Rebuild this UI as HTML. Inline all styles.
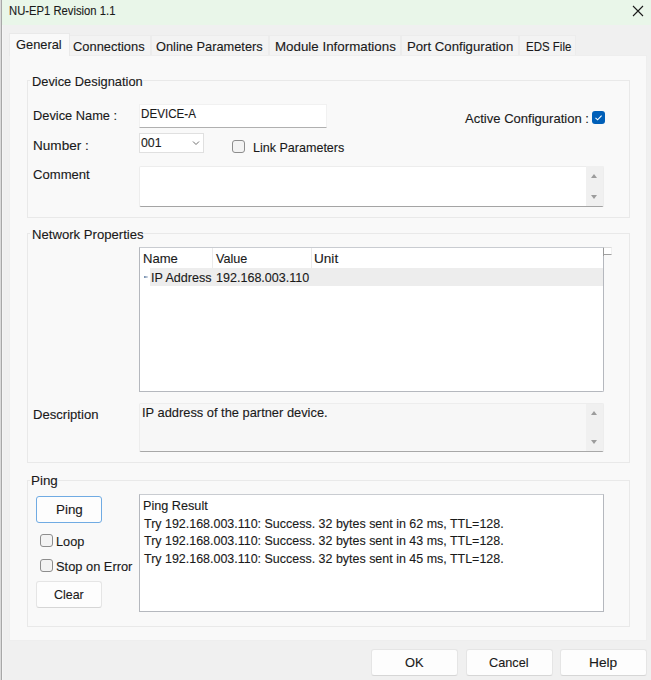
<!DOCTYPE html>
<html><head><meta charset="utf-8"><style>
html,body{margin:0;padding:0;}
body{width:651px;height:680px;overflow:hidden;position:relative;background:#f0f0f0;font-family:'Liberation Sans', sans-serif;}
.a{position:absolute;box-sizing:border-box;}
.t{position:absolute;white-space:pre;line-height:40px;transform-origin:0 0;-webkit-text-stroke:0.12px currentColor;}
</style></head><body>
<!-- window border -->
<div class="a" style="left:0;top:0;width:1px;height:680px;background:#dadada"></div>
<div class="a" style="left:1px;top:0;width:1px;height:680px;background:#a8a8a8"></div>
<div class="a" style="left:2px;top:25px;width:1px;height:655px;background:#f5f5f5"></div>
<!-- title bar -->
<div class="a" style="left:2px;top:0;width:649px;height:25px;background:#e9f6e9"></div>
<svg class="a" style="left:630px;top:3px" width="16" height="16" viewBox="0 0 16 16"><path d="M3 3 L13 13 M13 3 L3 13" stroke="#1a1a1a" stroke-width="1.1" fill="none"/></svg>
<!-- tabs -->
<div class="a" style="left:69px;top:35px;width:82px;height:21px;background:#f3f3f3;border:1px solid #ececec;border-bottom:none"></div>
<div class="a" style="left:151px;top:35px;width:118px;height:21px;background:#f3f3f3;border:1px solid #ececec;border-bottom:none"></div>
<div class="a" style="left:269px;top:35px;width:132px;height:21px;background:#f3f3f3;border:1px solid #ececec;border-bottom:none"></div>
<div class="a" style="left:401px;top:35px;width:118px;height:21px;background:#f3f3f3;border:1px solid #ececec;border-bottom:none"></div>
<div class="a" style="left:519px;top:35px;width:57px;height:21px;background:#f3f3f3;border:1px solid #ececec;border-bottom:none"></div>
<!-- panel -->
<div class="a" style="left:9px;top:55px;width:638px;height:586px;background:#f9f9f9;border:1px solid #eeeeee"></div>
<div class="a" style="left:9px;top:33px;width:61px;height:23px;background:#f9f9f9;border:1px solid #e9e9e9;border-bottom:none"></div>
<!-- group boxes -->
<div class="a" style="left:27px;top:80px;width:603px;height:138px;border:1px solid #e9e9e9"></div>
<div class="a" style="left:30px;top:75px;width:113px;height:10px;background:#f9f9f9"></div>
<div class="a" style="left:27px;top:233px;width:603px;height:230px;border:1px solid #e9e9e9"></div>
<div class="a" style="left:30px;top:228px;width:114px;height:10px;background:#f9f9f9"></div>
<div class="a" style="left:27px;top:480px;width:603px;height:147px;border:1px solid #e9e9e9"></div>
<div class="a" style="left:30px;top:475px;width:28px;height:10px;background:#f9f9f9"></div>
<!-- device name textbox -->
<div class="a" style="left:139px;top:104px;width:188px;height:24px;background:#fff;border:1px solid #f1f1f1;border-bottom:1px solid #b0b0b0;border-radius:1px"></div>
<!-- combo -->
<div class="a" style="left:139px;top:133px;width:65px;height:20px;background:#fff;border:1px solid #e0e0e0"></div>
<svg class="a" style="left:190px;top:139px" width="12" height="8" viewBox="0 0 12 8"><path d="M3 2.5 L6 5.5 L9 2.5" stroke="#707070" stroke-width="1" fill="none"/></svg>
<!-- link params checkbox -->
<div class="a" style="left:232px;top:140px;width:13px;height:13px;background:#f3f3f3;border:1px solid #8d8d8d;border-radius:3px"></div>
<!-- active config checkbox -->
<div class="a" style="left:592px;top:111px;width:13px;height:13px;background:#005fb8;border-radius:3px"></div>
<svg class="a" style="left:592px;top:111px" width="13" height="13" viewBox="0 0 13 13"><path d="M3.5 6.8 L5.6 8.8 L9.6 4.6" stroke="#fff" stroke-width="1.1" fill="none"/></svg>
<!-- comment box -->
<div class="a" style="left:139px;top:166px;width:465px;height:41px;background:#fff;border:1px solid #ededed;border-bottom:1px solid #a4a4a4;border-radius:2px"></div>
<div class="a" style="left:586px;top:166px;width:17px;height:40px;background:#f0f0f0"></div>
<svg class="a" style="left:586px;top:166px" width="17" height="40" viewBox="0 0 17 40"><path d="M5 12 L8 8 L11 12 Z M5 29 L8 33 L11 29 Z" fill="#9c9c9c"/></svg>
<!-- network list -->
<div class="a" style="left:139px;top:247px;width:465px;height:145px;background:#fff;border:1px solid #b5b8be;border-top-color:#c9ccd1;border-radius:0 0 2px 0"></div>
<div class="a" style="left:212px;top:248px;width:1px;height:20px;background:#ebebeb"></div>
<div class="a" style="left:311px;top:248px;width:1px;height:20px;background:#ebebeb"></div>
<div class="a" style="left:150px;top:268px;width:453px;height:18px;background:#ededed"></div>
<svg class="a" style="left:143px;top:274px" width="8" height="6" viewBox="0 0 8 6"><path d="M1 2 L5 2.7 L5 3.3 L1 4 Z" fill="#6f89aa"/></svg>
<div class="a" style="left:604px;top:247px;width:8px;height:8px;background:#fff;border-top:1px solid #dcdcdc;border-bottom:1px solid #a0a0a0;border-right:1px solid #f0f0f0"></div>
<div class="a" style="left:603px;top:248px;width:1px;height:8px;background:#9a9a9a"></div>
<!-- description -->
<div class="a" style="left:139px;top:403px;width:465px;height:49px;background:#f7f7f7;border:1px solid #ededed;border-bottom:1px solid #a8a8a8;border-radius:2px"></div>
<div class="a" style="left:586px;top:404px;width:17px;height:47px;background:#f0f0f0"></div>
<svg class="a" style="left:586px;top:404px" width="17" height="47" viewBox="0 0 17 47"><path d="M5 11 L8 7 L11 11 Z M5 36 L8 40 L11 36 Z" fill="#9c9c9c"/></svg>
<!-- ping buttons -->
<div class="a" style="left:36px;top:496px;width:66px;height:27px;background:#fdfdfd;border:1px solid #70abe3;border-radius:3px"></div>
<div class="a" style="left:40px;top:534px;width:13px;height:13px;background:#f3f3f3;border:1px solid #8d8d8d;border-radius:3px"></div>
<div class="a" style="left:40px;top:559px;width:13px;height:13px;background:#f3f3f3;border:1px solid #8d8d8d;border-radius:3px"></div>
<div class="a" style="left:36px;top:581px;width:66px;height:27px;background:#fdfdfd;border:1px solid #e5e5e5;border-bottom-color:#d6d6d6;border-radius:3px"></div>
<!-- ping result -->
<div class="a" style="left:139px;top:494px;width:465px;height:118px;background:#fff;border:1px solid #b5b8be;border-top-color:#c9ccd1"></div>
<!-- bottom buttons -->
<div class="a" style="left:371px;top:649px;width:87px;height:27px;background:#fdfdfd;border:1px solid #e5e5e5;border-bottom-color:#d6d6d6;border-radius:3px"></div>
<div class="a" style="left:466px;top:649px;width:87px;height:27px;background:#fdfdfd;border:1px solid #e5e5e5;border-bottom-color:#d6d6d6;border-radius:3px"></div>
<div class="a" style="left:560px;top:649px;width:87px;height:27px;background:#fdfdfd;border:1px solid #e5e5e5;border-bottom-color:#d6d6d6;border-radius:3px"></div>

<div class="t" style="left:8.66px;top:-8.90px;font-size:12px;transform:scaleX(0.9384);color:#1a1a1a">NU-EP1 Revision 1.1</div>
<div class="t" style="left:16.31px;top:24.90px;font-size:13px;transform:scaleX(0.9886);color:#1a1a1a">General</div>
<div class="t" style="left:73.41px;top:26.90px;font-size:13px;transform:scaleX(0.9915);color:#1a1a1a">Connections</div>
<div class="t" style="left:156.32px;top:26.90px;font-size:13px;transform:scaleX(0.9841);color:#1a1a1a">Online Parameters</div>
<div class="t" style="left:275.17px;top:26.90px;font-size:13px;transform:scaleX(1.0259);color:#1a1a1a">Module Informations</div>
<div class="t" style="left:407.29px;top:26.90px;font-size:13px;transform:scaleX(1.0136);color:#1a1a1a">Port Configuration</div>
<div class="t" style="left:525.52px;top:26.90px;font-size:13px;transform:scaleX(0.8840);color:#1a1a1a">EDS File</div>
<div class="t" style="left:31.91px;top:61.60px;font-size:13px;transform:scaleX(0.9882);color:#1a1a1a">Device Designation</div>
<div class="t" style="left:32.71px;top:96.30px;font-size:13px;transform:scaleX(0.9867);color:#1a1a1a">Device Name :</div>
<div class="t" style="left:140.91px;top:94.00px;font-size:13px;transform:scaleX(0.8950);color:#1a1a1a">DEVICE-A</div>
<div class="t" style="left:465.20px;top:99.10px;font-size:13px;transform:scaleX(1.0033);color:#1a1a1a">Active Configuration :</div>
<div class="t" style="left:32.56px;top:126.00px;font-size:13px;transform:scaleX(1.0431);color:#1a1a1a">Number :</div>
<div class="t" style="left:141.00px;top:123.30px;font-size:13px;transform:scaleX(0.9476);color:#1a1a1a">001</div>
<div class="t" style="left:252.64px;top:127.90px;font-size:13px;transform:scaleX(0.9645);color:#1a1a1a">Link Parameters</div>
<div class="t" style="left:32.59px;top:155.00px;font-size:13px;transform:scaleX(1.0073);color:#1a1a1a">Comment</div>
<div class="t" style="left:31.89px;top:214.90px;font-size:13px;transform:scaleX(1.0101);color:#1a1a1a">Network Properties</div>
<div class="t" style="left:142.69px;top:238.80px;font-size:13px;transform:scaleX(1.0061);color:#1a1a1a">Name</div>
<div class="t" style="left:216.10px;top:238.80px;font-size:13px;transform:scaleX(0.9719);color:#1a1a1a">Value</div>
<div class="t" style="left:314.15px;top:238.80px;font-size:13px;transform:scaleX(1.0455);color:#1a1a1a">Unit</div>
<div class="t" style="left:150.93px;top:257.70px;font-size:13px;transform:scaleX(0.9656);color:#1a1a1a">IP Address</div>
<div class="t" style="left:215.63px;top:257.70px;font-size:13px;transform:scaleX(0.9653);color:#1a1a1a">192.168.003.110</div>
<div class="t" style="left:32.79px;top:395.10px;font-size:13px;transform:scaleX(1.0063);color:#1a1a1a">Description</div>
<div class="t" style="left:142.31px;top:393.00px;font-size:13px;transform:scaleX(0.9892);color:#1a1a1a">IP address of the partner device.</div>
<div class="t" style="left:30.97px;top:460.60px;font-size:13px;transform:scaleX(1.0292);color:#1a1a1a">Ping</div>
<div class="t" style="left:55.87px;top:490.20px;font-size:13px;transform:scaleX(1.0292);color:#1a1a1a">Ping</div>
<div class="t" style="left:55.92px;top:521.80px;font-size:13px;transform:scaleX(0.9786);color:#1a1a1a">Loop</div>
<div class="t" style="left:55.91px;top:546.50px;font-size:13px;transform:scaleX(0.9882);color:#1a1a1a">Stop on Error</div>
<div class="t" style="left:53.84px;top:575.10px;font-size:13px;transform:scaleX(0.9567);color:#1a1a1a">Clear</div>
<div class="t" style="left:142.93px;top:485.90px;font-size:13px;transform:scaleX(0.9738);color:#1a1a1a">Ping Result</div>
<div class="t" style="left:143.50px;top:503.60px;font-size:13px;transform:scaleX(0.9586);color:#1a1a1a">Try 192.168.003.110: Success. 32 bytes sent in 62 ms, TTL=128.</div>
<div class="t" style="left:143.50px;top:520.80px;font-size:13px;transform:scaleX(0.9586);color:#1a1a1a">Try 192.168.003.110: Success. 32 bytes sent in 43 ms, TTL=128.</div>
<div class="t" style="left:143.50px;top:538.50px;font-size:13px;transform:scaleX(0.9586);color:#1a1a1a">Try 192.168.003.110: Success. 32 bytes sent in 45 ms, TTL=128.</div>
<div class="t" style="left:405.21px;top:643.00px;font-size:13px;transform:scaleX(0.9882);color:#1a1a1a">OK</div>
<div class="t" style="left:488.92px;top:643.00px;font-size:13px;transform:scaleX(0.9769);color:#1a1a1a">Cancel</div>
<div class="t" style="left:589.44px;top:643.00px;font-size:13px;transform:scaleX(1.0560);color:#1a1a1a">Help</div>
</body></html>
